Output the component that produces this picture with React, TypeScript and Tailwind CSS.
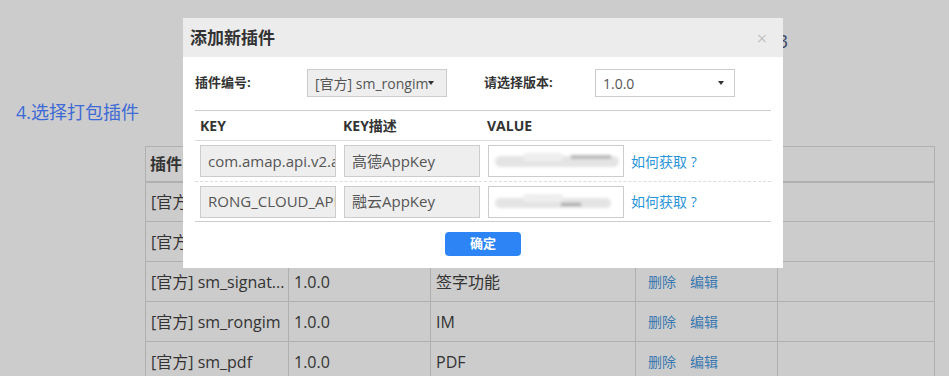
import React from "react";

const font = { fontFamily: '"Open Sans", "Noto Sans CJK SC", sans-serif' };

const rows = [
  { name: "[官方] sm_amap", ver: "1.0.0", desc: "高德地图" },
  { name: "[官方] sm_rongim", ver: "1.0.0", desc: "融云" },
  { name: "[官方] sm_signat...", ver: "1.0.0", desc: "签字功能" },
  { name: "[官方] sm_rongim", ver: "1.0.0", desc: "IM" },
  { name: "[官方] sm_pdf", ver: "1.0.0", desc: "PDF" },
];

const keyRows = [
  { key: "com.amap.api.v2.apikey", desc: "高德AppKey" },
  { key: "RONG_CLOUD_APP_KEY", desc: "融云AppKey" },
];

const Caret = () => (
  <span className="inline-block w-0 h-0 border-l-[3px] border-r-[3px] border-t-[4px] border-l-transparent border-r-transparent border-t-[#333]" />
);

// blurred secret value, the screenshot hides it
const BlurredValue = ({ second }: { second?: boolean }) => (
  <div className="flex items-center h-full pl-[4px] pr-[6px]">
    <div className="relative w-full h-[16px] blur-[1.5px]">
      <div
        className={
          second
            ? "absolute left-[2px] top-[4px] w-[116px] h-[10px] rounded-full bg-[#e4e4e4]"
            : "absolute left-[2px] top-[3px] w-[124px] h-[11px] rounded-full bg-[#e4e4e4]"
        }
      />
      <div className="absolute left-[30px] top-[0px] w-[40px] h-[8px] rounded-full bg-[#eeeeee]" />
      {second ? (
        <div className="absolute left-[68px] top-[9px] w-[20px] h-[3px] bg-[#aaaaaa]" />
      ) : (
        <div className="absolute left-[78px] top-[2px] w-[40px] h-[4px] bg-[#bbbbbb]" />
      )}
    </div>
  </div>
);

const AddPluginModal = () => (
  <div className="absolute left-[183px] top-[18px] w-[600px] h-[250px] bg-white" style={font}>
    {/* Header */}
    <div className="h-[39px] bg-[#ececec] flex items-center justify-between pl-[7px] pr-[16px]">
      <span className="text-[17px] font-bold text-[#333]">添加新插件</span>
      <span className="text-[18px] text-[#c4c4c4] leading-none">×</span>
    </div>

    <div className="px-[12px]">
      {/* Plugin / version selectors */}
      <div className="flex items-center h-[28px] mt-[12px] text-[13px]">
        <span className="w-[112px] font-bold text-[#333]">插件编号:</span>
        <div className="w-[140px] h-[28px] bg-[#eeeeee] border border-[#cccccc] flex items-center pl-[7px] text-[14px] text-[#555]">
          <span>[官方] sm_rongim</span>
          <Caret />
        </div>
        <span className="ml-[37px] w-[111px] font-bold text-[#333]">请选择版本:</span>
        <div className="w-[140px] h-[28px] bg-white border border-[#cccccc] flex items-center justify-between pl-[7px] pr-[10px] text-[14px] text-[#555]">
          <span>1.0.0</span>
          <Caret />
        </div>
      </div>

      {/* Key table */}
      <div className="mt-[13px] border-t border-[#cccccc]">
        <div className="h-[30px] flex items-center text-[14px] font-bold text-[#333] border-b border-[#dddddd]">
          <span className="w-[148px] pl-[5px]">KEY</span>
          <span className="w-[144px]">KEY描述</span>
          <span>VALUE</span>
        </div>
        {keyRows.map((r, i) => (
          <div
            key={r.key}
            className={
              i === 0
                ? "h-[41px] flex items-center pl-[5px] border-b border-dashed border-[#dddddd]"
                : "h-[40px] flex items-center pl-[5px] border-b border-[#cccccc]"
            }
          >
            <div className="w-[136px] h-[32px] bg-[#eeeeee] border border-[#cccccc] flex items-center pl-[7px] text-[15px] text-[#555] overflow-hidden whitespace-nowrap">
              {r.key}
            </div>
            <div className="ml-[8px] w-[136px] h-[32px] bg-[#eeeeee] border border-[#cccccc] flex items-center pl-[7px] text-[15px] text-[#555] overflow-hidden whitespace-nowrap">
              {r.desc}
            </div>
            <div className="ml-[8px] w-[136px] h-[32px] bg-white border border-[#cccccc] overflow-hidden">
              <BlurredValue second={i === 1} />
            </div>
            <span className="ml-[7px] text-[14px] text-[#2a95d8]">如何获取 ?</span>
          </div>
        ))}
      </div>

      {/* Submit */}
      <div className="flex justify-center mt-[10px]">
        <button className="w-[76px] h-[24px] rounded-[4px] bg-[#2d85f5] text-white text-[13px] font-bold">
          确定
        </button>
      </div>
    </div>
  </div>
);

export default function App() {
  return (
    <div className="relative w-[949px] h-[376px] bg-[#cccccc] overflow-hidden" style={font}>
      {/* page behind the dialog */}
      <div className="h-[50px] flex justify-end items-end pr-[161px]">
        <span className="text-[18px] text-[#3a4868] leading-none">版本号 1.0.3</span>
      </div>
      <div className="pl-[16px] mt-[49px] text-[18px] text-[#3d6ad6] leading-[26px]">4.选择打包插件</div>
      <table className="ml-[145px] mt-[21px] border-collapse text-[16px] text-[#333] table-fixed">
        <colgroup>
          <col className="w-[143px]" />
          <col className="w-[142px]" />
          <col className="w-[205px]" />
          <col className="w-[142px]" />
          <col className="w-[157px]" />
        </colgroup>
        <thead>
          <tr className="h-[35px] border-b-2 border-[#b0b0b0]">
            <th className="border border-[#b0b0b0] text-left pl-[4px] font-bold">插件</th>
            <th className="border border-[#b0b0b0] text-left pl-[5px] font-bold">版本</th>
            <th className="border border-[#b0b0b0] text-left pl-[5px] font-bold">描述</th>
            <th className="border border-[#b0b0b0] text-left pl-[12px] font-bold">操作</th>
            <th className="border border-[#b0b0b0]" />
          </tr>
        </thead>
        <tbody>
          {rows.map((r, i) => (
            <tr key={i} className="h-[40px]">
              <td className="border border-[#b0b0b0] pl-[5px] whitespace-nowrap overflow-hidden">{r.name}</td>
              <td className="border border-[#b0b0b0] pl-[5px]">{r.ver}</td>
              <td className="border border-[#b0b0b0] pl-[5px]">{r.desc}</td>
              <td className="border border-[#b0b0b0] pl-[12px] text-[14px] text-[#3a78b0]">
                删除<span className="ml-[14px]">编辑</span>
              </td>
              <td className="border border-[#b0b0b0]" />
            </tr>
          ))}
        </tbody>
      </table>
      <AddPluginModal />
    </div>
  );
}
